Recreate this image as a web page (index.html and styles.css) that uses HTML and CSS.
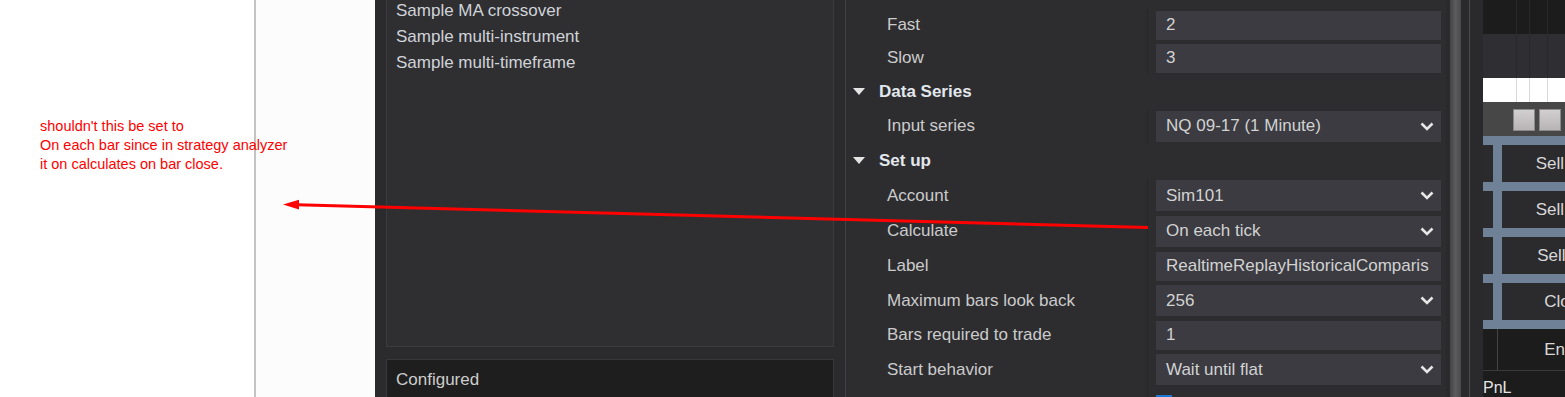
FILE: index.html
```html
<!doctype html>
<html lang="en">
<head>
    <meta charset="utf-8">
    <title>Strategy properties</title>
    <link rel="stylesheet" href="styles.css">
</head>
<body>
    <div class="page">
        <div class="note">
            <p>shouldn't this be set to<br>On each bar since in strategy analyzer<br>it on calculates on bar close.</p>
        </div>
        <div class="blank"></div>

        <div class="app">
            <!-- strategy list -->
            <div class="strategies">
                <ul class="list">
                    <li>Sample MA crossover</li>
                    <li>Sample multi-instrument</li>
                    <li>Sample multi-timeframe</li>
                </ul>
                <div class="configured">Configured</div>
            </div>

            <!-- property grid -->
            <div class="props">
                <div class="grid">
                    <div class="label">Fast</div>
                    <div class="value"><div class="box">2</div></div>
                    <div class="label">Slow</div>
                    <div class="value"><div class="box">3</div></div>

                    <div class="category"><span class="caret"></span>Data Series</div>
                    <div class="label">Input series</div>
                    <div class="value"><div class="box select">NQ 09-17 (1 Minute)<svg class="chev" viewBox="0 0 14 9"><polyline points="1.5,1.5 7,7 12.5,1.5"/></svg></div></div>

                    <div class="category"><span class="caret"></span>Set up</div>
                    <div class="label">Account</div>
                    <div class="value"><div class="box select">Sim101<svg class="chev" viewBox="0 0 14 9"><polyline points="1.5,1.5 7,7 12.5,1.5"/></svg></div></div>
                    <div class="label">Calculate</div>
                    <div class="value"><div class="box select">On each tick<svg class="chev" viewBox="0 0 14 9"><polyline points="1.5,1.5 7,7 12.5,1.5"/></svg></div></div>
                    <div class="label">Label</div>
                    <div class="value"><div class="box"><span class="clip">RealtimeReplayHistoricalComparis</span></div></div>
                    <div class="label">Maximum bars look back</div>
                    <div class="value"><div class="box select">256<svg class="chev" viewBox="0 0 14 9"><polyline points="1.5,1.5 7,7 12.5,1.5"/></svg></div></div>
                    <div class="label">Bars required to trade</div>
                    <div class="value"><div class="box">1</div></div>
                    <div class="label">Start behavior</div>
                    <div class="value"><div class="box select">Wait until flat<svg class="chev" viewBox="0 0 14 9"><polyline points="1.5,1.5 7,7 12.5,1.5"/></svg></div></div>
                    <div class="label"></div>
                    <div class="value"><span class="check"></span></div>
                </div>
            </div>

            <div class="scroll">
                <div class="thumb"></div>
                <div class="edge"></div>
            </div>

            <!-- chart trader -->
            <div class="trader">
                <div class="t-top"></div>
                <div class="t-mid"></div>
                <div class="t-white"></div>
                <div class="t-tools">
                    <span class="tool"></span>
                    <span class="tool"></span>
                </div>
                <div class="frame">
                    <div class="frow"><span class="stub"></span><div class="tbtn">Sell Mkt</div></div>
                    <div class="frow"><span class="stub"></span><div class="tbtn">Sell Ask</div></div>
                    <div class="frow"><span class="stub"></span><div class="tbtn">Sell Bid</div></div>
                    <div class="frow"><span class="stub"></span><div class="tbtn">Close</div></div>
                </div>
                <div class="entry"><span class="stub2"></span><div class="entry-text">Entry</div></div>
                <div class="pnl">PnL</div>
            </div>
        </div>
    </div>

    <svg class="arrow" width="1565" height="397" viewBox="0 0 1565 397">
        <line x1="1148" y1="227.5" x2="297" y2="204.8" stroke="#ff0000" stroke-width="3"/>
        <polygon points="283,204.6 299,199.8 299,209.6" fill="#ff0000"/>
    </svg>
</body>
</html>
```

FILE: styles.css
```css
body {
    margin: 0;
    padding: 0;
    background-color: #fff;
    overflow: hidden;
}
.page {
    display: flex;
    width: 1565px;
    height: 397px;
    overflow: hidden;
}

/* annotation area */
.note {
    width: 254px;
    flex-shrink: 0;
    border-right: 2px solid #c3c3c3;
    background-color: #fff;
}
.note p {
    margin: 0;
    padding: 117px 0 0 40px;
    font-family: "Liberation Sans", Arial, sans-serif;
    font-size: 14.5px;
    line-height: 19px;
    color: #ff0000;
    white-space: nowrap;
    position: relative;
}
.blank {
    width: 119px;
    flex-shrink: 0;
    background-color: #fcfcfc;
}

/* application */
.app {
    display: flex;
    flex: 1;
    overflow: hidden;
    background-color: #2b2b2e;
    font-family: "Liberation Sans", Arial, sans-serif;
    font-size: 17px;
    color: #cdcdcd;
}
.strategies {
    width: 470px;
    flex-shrink: 0;
    padding: 0 11px;
    box-sizing: border-box;
}
.list {
    list-style: none;
    margin: -10px 0 0;
    padding: 7px 0 0;
    height: 357px;
    box-sizing: border-box;
    background-color: #2f2f32;
    border: 1px solid #3c3c3f;
}
.list li {
    height: 26px;
    line-height: 26px;
    padding-left: 9px;
    color: #d0d3d8;
}
.configured {
    margin-top: 12px;
    height: 60px;
    padding: 8px 0 0 9px;
    line-height: 24px;
    background-color: #1e1e1e;
    border: 1px solid #38383b;
    box-sizing: border-box;
}

.props {
    width: 601px;
    flex-shrink: 0;
    border-left: 1px solid #404043;
    background-color: #2d2d30;
    box-sizing: border-box;
}
.grid {
    display: grid;
    grid-template-columns: 301px 1fr;
    grid-template-rows: 33px 33px 34px 35px 34.5px 35.5px 35.5px 34.5px 34.5px 34.75px 34.25px 34px;
    padding-top: 8.5px;
}
.label {
    display: flex;
    align-items: center;
    padding-left: 41px;
    color: #cbcbcb;
    white-space: nowrap;
}
.category {
    grid-column: 1 / 3;
    display: flex;
    align-items: center;
    padding-left: 7px;
    font-weight: bold;
    color: #e2e7ee;
}
.caret {
    width: 0;
    height: 0;
    border-left: 6px solid transparent;
    border-right: 6px solid transparent;
    border-top: 7px solid #e4e4e4;
    margin-right: 14px;
}
.value {
    display: flex;
    align-items: center;
    border-left: 1px solid #262628;
    padding: 0 5px 0 8px;
    min-width: 0;
}
.box {
    display: flex;
    align-items: center;
    justify-content: space-between;
    width: 100%;
    height: 29px;
    padding: 0 7px 0 10px;
    box-sizing: border-box;
    background-color: #3b3b41;
    color: #d2d2d2;
    white-space: nowrap;
    overflow: hidden;
}
.box.select {
    height: 31px;
}
.clip {
    overflow: hidden;
}
.chev {
    width: 14px;
    height: 9px;
    flex-shrink: 0;
}
.chev polyline {
    fill: none;
    stroke: #e6e6e6;
    stroke-width: 2.6;
}
.check {
    width: 16px;
    height: 16px;
    margin-top: 8px;
    background-color: #1b77d2;
    align-self: flex-start;
}

/* scrollbar */
.scroll {
    width: 37px;
    flex-shrink: 0;
    display: flex;
    background-color: #2a2a2c;
}
.thumb {
    width: 11px;
    margin-left: 4px;
    background: linear-gradient(to right, #444446, #5c5c5e, #4a4a4c);
}
.edge {
    width: 1px;
    margin-left: 8px;
    background-color: #4a4a4d;
}

/* chart trader */
.trader {
    width: 147px;
    flex-shrink: 0;
    display: flex;
    flex-direction: column;
    background-color: #1c1c1c;
}
.t-top,
.t-mid {
    background:
        linear-gradient(#282828, #282828) 33px 0 / 1px 100% no-repeat,
        linear-gradient(#282828, #282828) 46px 0 / 1px 100% no-repeat,
        linear-gradient(#282828, #282828) 64px 0 / 1px 100% no-repeat;
}
.t-top {
    height: 34px;
    background-color: #1c1c1c;
}
.t-mid {
    height: 44px;
    background-color: #2f2f33;
}
.t-white {
    height: 25px;
    background:
        linear-gradient(#d9d9d9, #d9d9d9) 33px 0 / 1px 100% no-repeat,
        linear-gradient(#d9d9d9, #d9d9d9) 46px 0 / 1px 100% no-repeat,
        linear-gradient(#d9d9d9, #d9d9d9) 64px 0 / 1px 100% no-repeat,
        #ffffff;
}
.t-tools {
    height: 34px;
    display: flex;
    gap: 4px;
    padding: 7px 0 0 30px;
    box-sizing: border-box;
    background-color: #474747;
}
.tool {
    width: 22px;
    height: 22px;
    box-sizing: border-box;
    border: 1px solid #8a8a8a;
    background: linear-gradient(#d2cfd0, #b8b4b6);
}
.frame {
    display: flex;
    flex-direction: column;
    gap: 9px;
    padding: 9px 0;
    background-color: #6f8197;
}
.frow {
    display: flex;
    height: 37px;
}
.stub {
    width: 10px;
    margin-right: 9px;
    background-color: #2b2b2e;
}
.tbtn {
    flex: 1;
    display: flex;
    align-items: center;
    justify-content: center;
    background-color: #2b2b2e;
    color: #d8d8d8;
    white-space: nowrap;
}
.entry {
    display: flex;
    height: 41px;
}
.stub2 {
    width: 14px;
    border-right: 1px solid #454545;
}
.entry-text {
    flex: 1;
    display: flex;
    align-items: center;
    justify-content: center;
    color: #d8d8d8;
}
.pnl {
    flex: 1;
    border-top: 1px solid #3a3a3a;
    padding-top: 8px;
    font-size: 16px;
    color: #e6e6e6;
}

/* red annotation arrow */
.arrow {
    position: absolute;
    top: 0;
    left: 0;
    pointer-events: none;
}
```
